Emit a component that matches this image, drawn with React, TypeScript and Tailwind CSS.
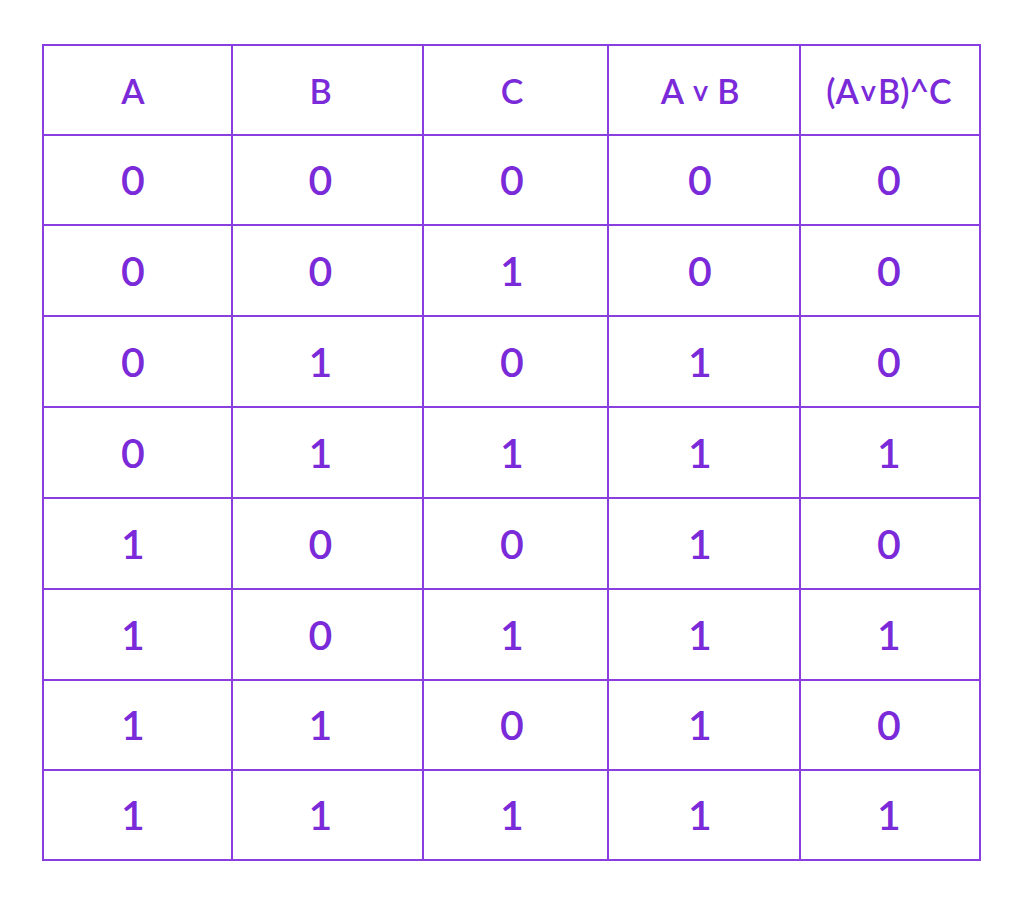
import type { ReactNode } from "react"

// small raised "v" used for the logical OR in the headers
function Or() {
  return <span className="inline-block -translate-y-[3px] text-[29px] font-semibold">v</span>
}

const headers: ReactNode[] = [
  "A",
  "B",
  "C",
  <span key="ab" className="flex items-baseline gap-[9px]">
    A<Or />B
  </span>,
  <span key="abc" className="flex items-baseline">
    (A<span className="mx-[2px]"><Or /></span>B)^C
  </span>,
]

// per-column nudge so the text sits where it does in the picture
const nudge = ["pr-[9px]", "pr-[14px]", "pr-[7px]", "pr-[8px]", "pr-[2px]"]

const rows = [
  [0, 0, 0, 0, 0],
  [0, 0, 1, 0, 0],
  [0, 1, 0, 1, 0],
  [0, 1, 1, 1, 1],
  [1, 0, 0, 1, 0],
  [1, 0, 1, 1, 1],
  [1, 1, 0, 1, 0],
  [1, 1, 1, 1, 1],
]

export default function App() {
  return (
    <div className="h-[905px] w-[1024px] bg-white pl-[42px] pt-[44px] font-['Lato',sans-serif]">
      <div className="grid w-fit grid-cols-[189px_191px_185px_192px_180px] grid-rows-[90px_90px_91px_91px_91px_91px_91px_90px_90px] border-l-2 border-t-2 border-[#8a3ee0]">
        {headers.map((h, c) => (
          <div
            key={c}
            className={`flex items-center justify-center border-b-2 border-r-2 border-[#8a3ee0] text-[34px] font-semibold text-[#7a2ad8] ${nudge[c]}`}
          >
            {h}
          </div>
        ))}
        {rows.map((row, r) =>
          row.map((v, c) => (
            <div
              key={`${r}-${c}`}
              className={`flex items-center justify-center border-b-2 border-r-2 border-[#8a3ee0] text-[41px] font-semibold text-[#7a2ad8] ${nudge[c]}`}
            >
              {v}
            </div>
          )),
        )}
      </div>
    </div>
  )
}
